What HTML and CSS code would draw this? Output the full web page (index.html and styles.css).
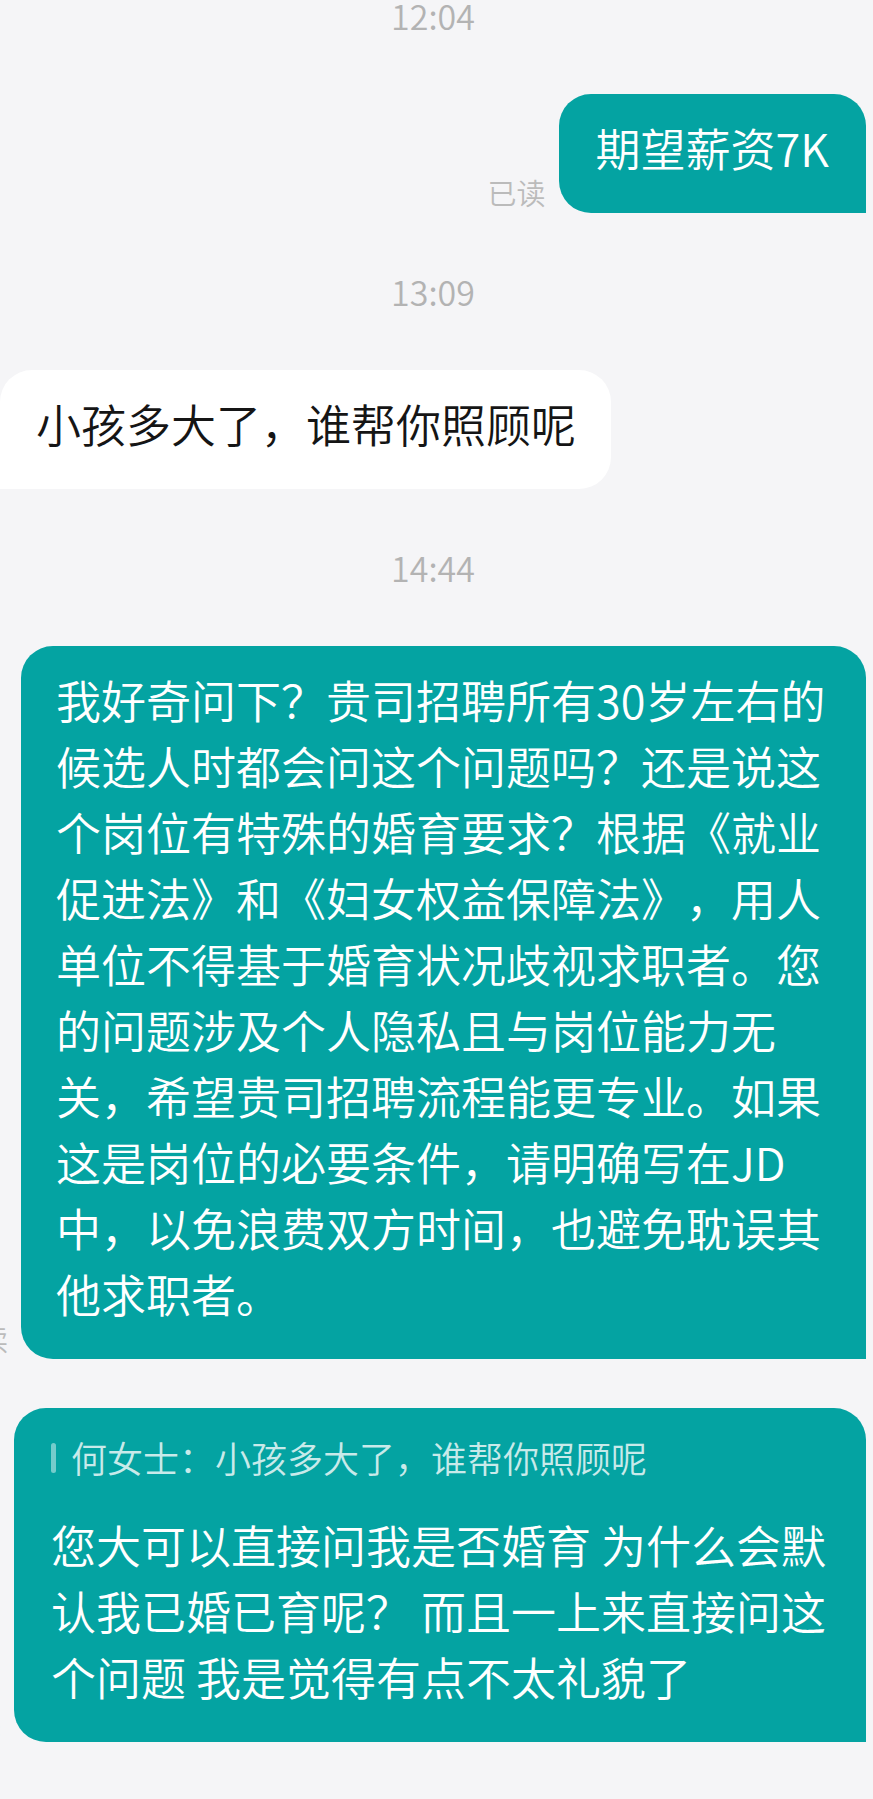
FILE: index.html
```html
<!DOCTYPE html>
<html lang="zh-CN">
<head>
  <meta charset="UTF-8">
  <meta name="viewport" content="width=device-width, initial-scale=1.0">
  <title>聊天记录</title>
  <link rel="stylesheet" href="styles.css">
</head>
<body>
  <div class="chat">
    <div class="time">12:04</div>
    <div class="row sent">
      <span class="read">已读</span>
      <div class="bubble">期望薪资7K</div>
    </div>

    <div class="time">13:09</div>
    <div class="row received">
      <div class="bubble">小孩多大了，谁帮你照顾呢</div>
    </div>

    <div class="time">14:44</div>
    <div class="row sent">
      <span class="read">已读</span>
      <div class="bubble long">我好奇问下？贵司招聘所有30岁左右的候选人时都会问这个问题吗？还是说这个岗位有特殊的婚育要求？根据《就业促进法》和《妇女权益保障法》，用人单位不得基于婚育状况歧视求职者。您的问题涉及个人隐私且与岗位能力无关，希望贵司招聘流程能更专业。如果这是岗位的必要条件，请明确写在JD中，以免浪费双方时间，也避免耽误其他求职者。</div>
    </div>
    <div class="row sent">
      <span class="read">已读</span>
      <div class="bubble long reply">
        <div class="quote"><span class="quote-bar"></span>何女士：小孩多大了，谁帮你照顾呢</div>
        <p>您大可以直接问我是否婚育 为什么会默认我已婚已育呢？ 而且一上来直接问这个问题 我是觉得有点不太礼貌了</p>
      </div>
    </div>
  </div>
</body>
</html>
```

FILE: styles.css
```css
/* General Styles */
* {
  box-sizing: border-box;
}

body {
  margin: 0;
  background-color: #f5f5f7;
  font-family: "Noto Sans CJK SC", "Noto Sans", sans-serif;
  font-weight: 350;
  overflow-x: hidden;
  text-spacing-trim: space-all;
  text-autospace: no-autospace;
}

.chat {
  display: flex;
  flex-direction: column;
  padding: 0 7px 40px 0;
}

/* Timestamps */
.time {
  text-align: center;
  font-size: 34px;
  line-height: 26px;
  color: #b3b3b3;
  margin: 66px 0 65px;
}

.time:first-child {
  margin-top: 3px;
}

/* Message rows */
.row {
  display: flex;
  align-items: flex-end;
}

.row.sent {
  justify-content: flex-end;
}

.row + .row {
  margin-top: 49px;
}

.read {
  flex-shrink: 0;
  font-size: 29px;
  line-height: 29px;
  color: #bbbbbb;
  margin: 0 13px 6px 0;
}

/* Bubbles */
.bubble {
  flex-shrink: 0;
  font-size: 45px;
  line-height: 66px;
  padding: 21px 37px 32px;
  border-radius: 32px;
}

.sent .bubble {
  background-color: #04a3a2;
  color: #fff;
  border-bottom-right-radius: 0;
}

.received .bubble {
  background-color: #fff;
  color: #151515;
  padding: 21px 35px 32px 36px;
  border-bottom-left-radius: 0;
}

.bubble.long {
  max-width: 845px;
  padding: 21px 32px 32px 35px;
}

.bubble.reply {
  max-width: 852px;
  padding-left: 37px;
}

.reply p {
  margin: 0;
}

/* Quoted message */
.quote {
  display: flex;
  align-items: center;
  font-size: 36px;
  line-height: 56px;
  color: rgba(255, 255, 255, 0.78);
  margin-bottom: 27px;
}

.quote-bar {
  flex-shrink: 0;
  width: 5px;
  height: 30px;
  border-radius: 3px;
  background-color: rgba(255, 255, 255, 0.45);
  margin: 2px 15px 0 0;
}
```
